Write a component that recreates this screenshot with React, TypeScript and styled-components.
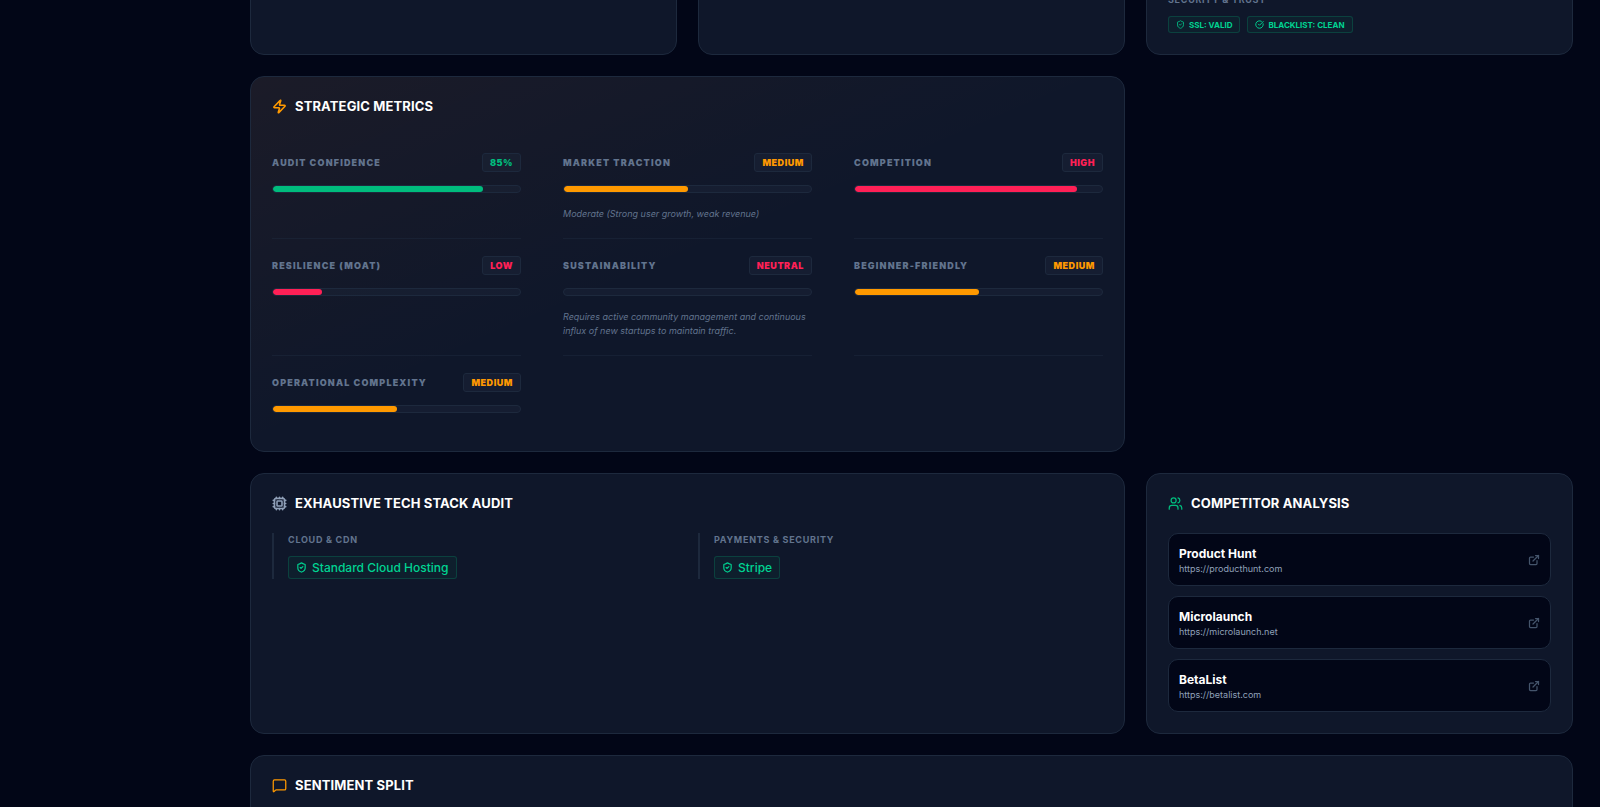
import React from "react";
import styled, { createGlobalStyle } from "styled-components";
import {
  CircleCheckBig,
  Cpu,
  ExternalLink,
  MessageSquare,
  ShieldCheck,
  Users,
  Zap,
} from "lucide-react";

const color = {
  page: "#020617",
  card: "#0f172a",
  line: "#1d293d",
  white: "#ffffff",
  label: "#62748e",
  muted: "#90a1b9",
  faint: "#45556c",
  green: "#00bc7d",
  mint: "#00d492",
  orange: "#ff9900",
  red: "#ff2056",
};

const GlobalStyle = createGlobalStyle`
  *, *::before, *::after { box-sizing: border-box; }
  body {
    margin: 0;
    background: ${color.page};
    color: ${color.white};
    font-family: Inter, "Liberation Sans", sans-serif;
  }
  h2, h3, p, ul { margin: 0; padding: 0; }
  ul { list-style: none; }
`;

const Shell = styled.div`
  display: grid;
  grid-template-columns: 223px minmax(0, 1fr);
  height: 100vh;
  overflow: hidden;
`;

const Dashboard = styled.main`
  grid-column: 2;
  display: grid;
  grid-template-columns: repeat(3, minmax(0, 1fr));
  align-content: start;
  gap: 21px;
  margin-top: -29px;
  padding: 0 27px;
`;

const Card = styled.section<{ $span?: number; $warm?: boolean }>`
  grid-column: span ${(p) => p.$span ?? 1};
  padding: 21px;
  border: 1px solid ${color.line};
  border-radius: 14px;
  background: ${(p) =>
      p.$warm
        ? "linear-gradient(to bottom right, rgba(255, 105, 0, 0.05), transparent 50%)"
        : "none"}
    ${color.card};
`;

const Heading = styled.h2<{ $icon: string }>`
  display: flex;
  align-items: center;
  gap: 8px;
  margin-bottom: 21px;
  font-size: 13px;
  line-height: 17px;
  font-weight: 700;
  letter-spacing: 0.01em;
  text-transform: uppercase;

  svg { color: ${(p) => p.$icon}; }
`;

const GroupLabel = styled.h3`
  margin-bottom: 10px;
  color: ${color.label};
  font-size: 9px;
  line-height: 13px;
  font-weight: 700;
  letter-spacing: 0.08em;
  text-transform: uppercase;
`;

const TagRow = styled.div`
  display: flex;
  flex-wrap: wrap;
  gap: 7px;
`;

const Tag = styled.span<{ $large?: boolean }>`
  display: inline-flex;
  align-items: center;
  gap: ${(p) => (p.$large ? 5 : 4)}px;
  height: ${(p) => (p.$large ? 23 : 17)}px;
  padding: 0 7px;
  border: 1px solid rgba(0, 188, 125, 0.22);
  border-radius: 3px;
  background: rgba(0, 188, 125, 0.05);
  color: ${color.mint};
  font-size: ${(p) => (p.$large ? 12 : 8)}px;
  font-weight: ${(p) => (p.$large ? 500 : 700)};
`;

const Metrics = styled.div`
  display: grid;
  grid-template-columns: repeat(3, minmax(0, 1fr));
  column-gap: 42px;
`;

const Metric = styled.div`
  padding: 17px 0;
  border-bottom: 1px solid rgba(29, 41, 61, 0.5);

  &:last-child { border-bottom: 0; }
`;

const MetricHead = styled.div`
  display: flex;
  align-items: center;
  justify-content: space-between;
  margin-bottom: 13px;
`;

const MetricName = styled.h3`
  color: ${color.label};
  font-size: 9px;
  line-height: 13px;
  font-weight: 900;
  letter-spacing: 0.13em;
  text-transform: uppercase;
`;

const Badge = styled.span<{ $tone: string }>`
  padding: 0 7px;
  border: 1px solid ${color.line};
  border-radius: 3px;
  background: rgba(29, 41, 61, 0.4);
  color: ${(p) => p.$tone};
  font-size: 9px;
  line-height: 17px;
  font-weight: 900;
  letter-spacing: 0.06em;
  text-transform: uppercase;
`;

const Track = styled.div`
  height: 8px;
  border: 1px solid ${color.line};
  border-radius: 4px;
  background: rgba(29, 41, 61, 0.4);
  overflow: hidden;
`;

const Fill = styled.div<{ $tone: string }>`
  height: 100%;
  border-radius: 4px;
  background: ${(p) => p.$tone};
`;

const Note = styled.p`
  margin-top: 14px;
  color: ${color.label};
  font-size: 9px;
  line-height: 14px;
  font-style: italic;
`;

const StackGrid = styled.div`
  display: grid;
  grid-template-columns: repeat(2, minmax(0, 1fr));
  gap: 21px;
`;

const StackGroup = styled.div`
  padding-left: 14px;
  border-left: 2px solid ${color.line};
`;

const CompetitorList = styled.ul`
  display: flex;
  flex-direction: column;
  gap: 10px;
`;

const Competitor = styled.a`
  display: flex;
  align-items: center;
  justify-content: space-between;
  height: 53px;
  padding: 0 10px;
  border: 1px solid ${color.line};
  border-radius: 10px;
  background: ${color.page};
  color: ${color.faint};
  text-decoration: none;
`;

const CompetitorName = styled.p`
  color: ${color.white};
  font-size: 12px;
  line-height: 17px;
  font-weight: 700;
`;

const CompetitorUrl = styled.p`
  color: ${color.muted};
  font-size: 9px;
  line-height: 13px;
`;

const Spacer = styled.div`
  height: 120px;
`;

type MetricData = {
  name: string;
  value: string;
  tone: string;
  percent: number;
  note?: string;
};

const metrics: MetricData[] = [
  { name: "Audit Confidence", value: "85%", tone: color.green, percent: 85 },
  {
    name: "Market Traction",
    value: "Medium",
    tone: color.orange,
    percent: 50,
    note: "Moderate (Strong user growth, weak revenue)",
  },
  { name: "Competition", value: "High", tone: color.red, percent: 90 },
  { name: "Resilience (Moat)", value: "Low", tone: color.red, percent: 20 },
  {
    name: "Sustainability",
    value: "Neutral",
    tone: color.red,
    percent: 0,
    note: "Requires active community management and continuous influx of new startups to maintain traffic.",
  },
  { name: "Beginner-Friendly", value: "Medium", tone: color.orange, percent: 50 },
  { name: "Operational Complexity", value: "Medium", tone: color.orange, percent: 50 },
];

const stack = [
  { group: "Cloud & CDN", item: "Standard Cloud Hosting" },
  { group: "Payments & Security", item: "Stripe" },
];

const competitors = [
  { name: "Product Hunt", url: "https://producthunt.com" },
  { name: "Microlaunch", url: "https://microlaunch.net" },
  { name: "BetaList", url: "https://betalist.com" },
];

export default function App() {
  return (
    <>
      <GlobalStyle />
      <Shell>
        <Dashboard>
          <Card />
          <Card />
          <Card>
            <GroupLabel>Security &amp; Trust</GroupLabel>
            <TagRow>
              <Tag>
                <ShieldCheck size={9} />
                SSL: VALID
              </Tag>
              <Tag>
                <CircleCheckBig size={9} strokeWidth={2.5} />
                BLACKLIST: CLEAN
              </Tag>
            </TagRow>
          </Card>

          <Card $span={2} $warm>
            <Heading $icon={color.orange}>
              <Zap size={15} strokeWidth={2.5} />
              Strategic Metrics
            </Heading>
            <Metrics>
              {metrics.map((m) => (
                <Metric key={m.name}>
                  <MetricHead>
                    <MetricName>{m.name}</MetricName>
                    <Badge $tone={m.tone}>{m.value}</Badge>
                  </MetricHead>
                  <Track>
                    <Fill $tone={m.tone} style={{ width: `${m.percent}%` }} />
                  </Track>
                  {m.note && <Note>{m.note}</Note>}
                </Metric>
              ))}
            </Metrics>
          </Card>
          <div />

          <Card $span={2}>
            <Heading $icon={color.muted}>
              <Cpu size={15} strokeWidth={2.5} />
              Exhaustive Tech Stack Audit
            </Heading>
            <StackGrid>
              {stack.map((s) => (
                <StackGroup key={s.group}>
                  <GroupLabel>{s.group}</GroupLabel>
                  <TagRow>
                    <Tag $large>
                      <ShieldCheck size={11} strokeWidth={2.5} />
                      {s.item}
                    </Tag>
                  </TagRow>
                </StackGroup>
              ))}
            </StackGrid>
          </Card>

          <Card>
            <Heading $icon={color.green}>
              <Users size={15} />
              Competitor Analysis
            </Heading>
            <CompetitorList>
              {competitors.map((c) => (
                <li key={c.name}>
                  <Competitor href={c.url}>
                    <div>
                      <CompetitorName>{c.name}</CompetitorName>
                      <CompetitorUrl>{c.url}</CompetitorUrl>
                    </div>
                    <ExternalLink size={12} strokeWidth={2.5} />
                  </Competitor>
                </li>
              ))}
            </CompetitorList>
          </Card>

          <Card $span={3}>
            <Heading $icon={color.orange}>
              <MessageSquare size={15} />
              Sentiment Split
            </Heading>
            <Spacer />
          </Card>
        </Dashboard>
      </Shell>
    </>
  );
}
